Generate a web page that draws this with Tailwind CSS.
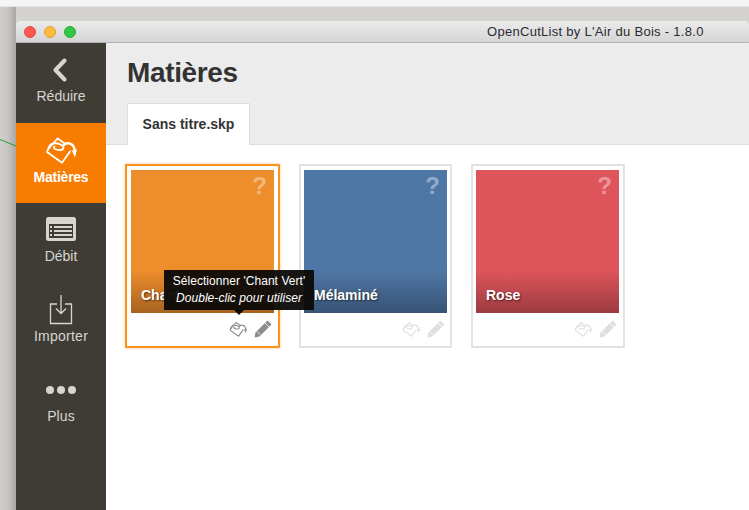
<!DOCTYPE html>
<html lang="fr">
<head>
<meta charset="utf-8">
<script src="https://cdn.jsdelivr.net/npm/@tailwindcss/browser@4"></script>
</head>
<body class="relative w-[749px] h-[510px] overflow-hidden bg-[#d4d3cf] font-['Liberation_Sans',Arial,sans-serif] antialiased">
<div class="h-[7px] bg-[#f5f5f5] border-b border-[#e2e2e0]"></div>
<div class="absolute left-0 top-[7px] bottom-0 w-4 bg-gradient-to-r from-[#d0cfcb] via-[#c6c5c1] to-[#a9a8a5]"></div>
<svg class="absolute left-0 top-[130px]" width="16" height="20"><line x1="0" y1="9.500" x2="16" y2="16" stroke="#2a9a3a" stroke-width="1"/></svg>
<div class="relative ml-4 mt-[14px] h-[489px] rounded-t-[5px] overflow-hidden bg-white flex flex-col">
  <div class="relative h-[22px] shrink-0 bg-gradient-to-b from-[#ebebeb] to-[#d5d5d5] border-b border-[#b4b4b4] flex items-center">
    <div class="flex gap-2 ml-2">
      <span class="w-3 h-3 rounded-full bg-[#fc5753] border border-[#df4744]"></span>
      <span class="w-3 h-3 rounded-full bg-[#fdbc40] border border-[#de9f34]"></span>
      <span class="w-3 h-3 rounded-full bg-[#33c748] border border-[#27aa35]"></span>
    </div>
    <span class="absolute left-[471px] top-[2px] text-[13px] leading-[18px] text-[#2b2b33] tracking-[0.29px] whitespace-nowrap">OpenCutList by L'Air du Bois - 1.8.0</span>
  </div>
  <div class="flex flex-1 min-h-0">
    <nav class="w-[90px] shrink-0 bg-[#3f3c35] text-[#d7d5cf] text-[14px] leading-5 text-center flex flex-col">
      <div class="h-20 flex flex-col items-center pt-[15px]">
        <svg width="14" height="24" viewBox="0 0 14 24" class="mr-[2px]"><path d="M11.500 2.500 2.500 12l9 9.500" fill="none" stroke="#d7d5cf" stroke-width="4" stroke-linecap="round" stroke-linejoin="round"/></svg>
        <span class="mt-[4px]">Réduire</span>
      </div>
      <div class="h-20 bg-[#f87c00] text-white flex flex-col items-center pt-[13px]">
        <svg width="32" height="28" viewBox="0 0 32 28" fill="none" stroke="#fff" stroke-width="1.800" stroke-linejoin="round" stroke-linecap="round"><path d="M3.300 13 2 16 17 26.800 25 15.500"/><path d="M3.300 13 12.500 2.500 20.500 8"/><path d="M3.300 13C4 9 6 7.500 9 7.300 13 7 18.500 9 18.500 12 18 14.500 13 14.500 10 13 8.500 12.300 8.500 11 9.500 10.500"/><path d="M18.500 9.500C20 6.500 29.500 5 29.800 16" stroke-width="2.400"/><path d="M26.500 14 30 21.500 32 13 29.300 15Z" fill="#fff" stroke="none"/></svg>
        <span class="mt-[3px] font-bold tracking-[-0.25px]">Matières</span>
      </div>
      <div class="h-20 flex flex-col items-center pt-[14px]">
        <svg width="30" height="24" viewBox="0 0 30 24"><rect x="0" y="0" width="30" height="24" rx="2.500" fill="#d7d5cf"/><rect x="3" y="7" width="24" height="14" fill="#3f3c35"/><g fill="#d7d5cf"><rect x="4" y="9" width="2" height="2"/><rect x="4" y="13" width="2" height="2"/><rect x="4" y="17" width="2" height="2"/><rect x="8" y="9" width="18" height="2"/><rect x="8" y="13" width="18" height="2"/><rect x="8" y="17" width="18" height="2"/></g></svg>
        <span class="mt-[5px]">Débit</span>
      </div>
      <div class="h-20 flex flex-col items-center pt-[11px]">
        <svg width="24" height="31" viewBox="0 0 24 31" fill="none" stroke="#d7d5cf" stroke-width="1.300"><path d="M8 10H1.500V29.500H22.500V10H16"/><path d="M12 1V19M7 14.500 12 19.500 17 14.500"/></svg>
        <span class="mt-[1px] tracking-[0.25px]">Importer</span>
      </div>
      <div class="h-20 flex flex-col items-center pt-[23px]">
        <div class="flex gap-[3px]"><span class="w-2 h-2 rounded-full bg-[#d7d5cf]"></span><span class="w-2 h-2 rounded-full bg-[#d7d5cf]"></span><span class="w-2 h-2 rounded-full bg-[#d7d5cf]"></span></div>
        <span class="mt-[12px] tracking-[0.1px]">Plus</span>
      </div>
      <div class="flex-1"></div>
    </nav>
    <main class="flex-1 min-w-0 flex flex-col">
      <header class="h-[102px] shrink-0 bg-[#ececec] border-b border-[#dddddd] pl-[21px] relative">
        <h1 class="pt-[14px] text-[28px] leading-[32px] font-bold text-[#333333] tracking-[-0.35px]">Matières</h1>
        <div class="absolute left-[21px] top-[60px] w-[123px] h-[42px] bg-white border border-b-0 border-[#dddddd] text-center text-[14px] font-bold leading-[40px] text-[#333]">Sans titre.skp</div>
      </header>
      <section class="flex pt-[19px] pl-[19px] gap-[19px]">

        <article class="relative w-[155px] h-[184px] border-2 border-[#f8941d] rounded-[1px] p-[4px] shadow-[0_0_3px_rgba(248,124,0,0.45)]">
          <div class="relative w-[143px] h-[143px] bg-[#ee8d2c] overflow-hidden">
            <span class="absolute right-[7px] top-[2px] text-[24px] leading-[28px] font-bold text-white/40">?</span>
            <div class="absolute inset-x-0 bottom-0 h-[43px] bg-gradient-to-b from-black/0 to-black/30 pl-[10px] pt-[15px] text-[14px] leading-5 font-bold text-white [text-shadow:1px_1px_2px_rgba(0,0,0,0.6)]">Chant Vert</div>
          </div>
          <div class="flex justify-end items-start gap-[7px] pr-[2px] pt-[7px]">
            <svg width="18" height="18" viewBox="0 0 32 28" fill="none" stroke="#8c8c8c" stroke-width="2" stroke-linejoin="round" stroke-linecap="round"><path d="M3.300 13 2 16 17 26.800 25 15.500"/><path d="M3.300 13 12.500 2.500 20.500 8"/><path d="M3.300 13C4 9 6 7.500 9 7.300 13 7 18.500 9 18.500 12 18 14.500 13 14.500 10 13 8.500 12.300 8.500 11 9.500 10.500"/><path d="M18.500 9.500C20 6.500 29.500 5 29.800 16"/><path d="M26.500 14 30 21.500 32 13 29.300 15Z" fill="#8c8c8c" stroke="none"/></svg>
            <svg width="18" height="18" viewBox="0 0 18 18"><path d="M13.500 .5 17.500 4.500 5.500 16.500 .5 17.500 1.500 12.500Z" fill="#8c8c8c"/><path d="M11 3 15 7M3 11.500 6.500 15" stroke="#fff" stroke-width=".8"/></svg>
          </div>
        </article>

        <article class="relative w-[153px] h-[184px] border-2 border-[#e2e2e2] pl-[3px] pt-[4px]">
          <div class="relative w-[143px] h-[143px] bg-[#4f77a6] overflow-hidden">
            <span class="absolute right-[7px] top-[2px] text-[24px] leading-[28px] font-bold text-white/40">?</span>
            <div class="absolute inset-x-0 bottom-0 h-[43px] bg-gradient-to-b from-black/0 to-black/30 pl-[10px] pt-[15px] text-[14px] leading-5 font-bold text-white [text-shadow:1px_1px_2px_rgba(0,0,0,0.6)]">Mélaminé</div>
          </div>
          <div class="flex justify-end items-start gap-[7px] pr-[2px] pt-[7px] w-[143px]">
            <svg width="18" height="18" viewBox="0 0 32 28" fill="none" stroke="#dfdfdf" stroke-width="2" stroke-linejoin="round" stroke-linecap="round"><path d="M3.300 13 2 16 17 26.800 25 15.500"/><path d="M3.300 13 12.500 2.500 20.500 8"/><path d="M3.300 13C4 9 6 7.500 9 7.300 13 7 18.500 9 18.500 12 18 14.500 13 14.500 10 13 8.500 12.300 8.500 11 9.500 10.500"/><path d="M18.500 9.500C20 6.500 29.500 5 29.800 16"/><path d="M26.500 14 30 21.500 32 13 29.300 15Z" fill="#dfdfdf" stroke="none"/></svg>
            <svg width="18" height="18" viewBox="0 0 18 18"><path d="M13.500 .5 17.500 4.500 5.500 16.500 .5 17.500 1.500 12.500Z" fill="#dfdfdf"/><path d="M11 3 15 7M3 11.500 6.500 15" stroke="#fff" stroke-width=".8"/></svg>
          </div>
        </article>

        <article class="relative w-[154px] h-[184px] border-2 border-[#e2e2e2] pl-[3px] pt-[4px]">
          <div class="relative w-[143px] h-[143px] bg-[#df555c] overflow-hidden">
            <span class="absolute right-[7px] top-[2px] text-[24px] leading-[28px] font-bold text-white/40">?</span>
            <div class="absolute inset-x-0 bottom-0 h-[43px] bg-gradient-to-b from-black/0 to-black/30 pl-[10px] pt-[15px] text-[14px] leading-5 font-bold text-white [text-shadow:1px_1px_2px_rgba(0,0,0,0.6)]">Rose</div>
          </div>
          <div class="flex justify-end items-start gap-[7px] pr-[2px] pt-[7px] w-[143px]">
            <svg width="18" height="18" viewBox="0 0 32 28" fill="none" stroke="#dfdfdf" stroke-width="2" stroke-linejoin="round" stroke-linecap="round"><path d="M3.300 13 2 16 17 26.800 25 15.500"/><path d="M3.300 13 12.500 2.500 20.500 8"/><path d="M3.300 13C4 9 6 7.500 9 7.300 13 7 18.500 9 18.500 12 18 14.500 13 14.500 10 13 8.500 12.300 8.500 11 9.500 10.500"/><path d="M18.500 9.500C20 6.500 29.500 5 29.800 16"/><path d="M26.500 14 30 21.500 32 13 29.300 15Z" fill="#dfdfdf" stroke="none"/></svg>
            <svg width="18" height="18" viewBox="0 0 18 18"><path d="M13.500 .5 17.500 4.500 5.500 16.500 .5 17.500 1.500 12.500Z" fill="#dfdfdf"/><path d="M11 3 15 7M3 11.500 6.500 15" stroke="#fff" stroke-width=".8"/></svg>
          </div>
        </article>
      </section>
    </main>
  </div>
</div>
<div class="absolute left-[164px] top-[270px] w-[150px] h-[40px] bg-[#0c0a08]/95 text-white text-[12px] leading-[17px] text-center pt-[3px] tracking-[0.05px] whitespace-nowrap">
  <div>Sélectionner 'Chant Vert'</div>
  <div class="italic">Double-clic pour utiliser</div>
  <div class="absolute left-[70px] top-[40px] w-0 h-0 border-x-[5px] border-x-transparent border-t-[5px] border-t-[#0c0a08]"></div>
</div>
</body>
</html>
